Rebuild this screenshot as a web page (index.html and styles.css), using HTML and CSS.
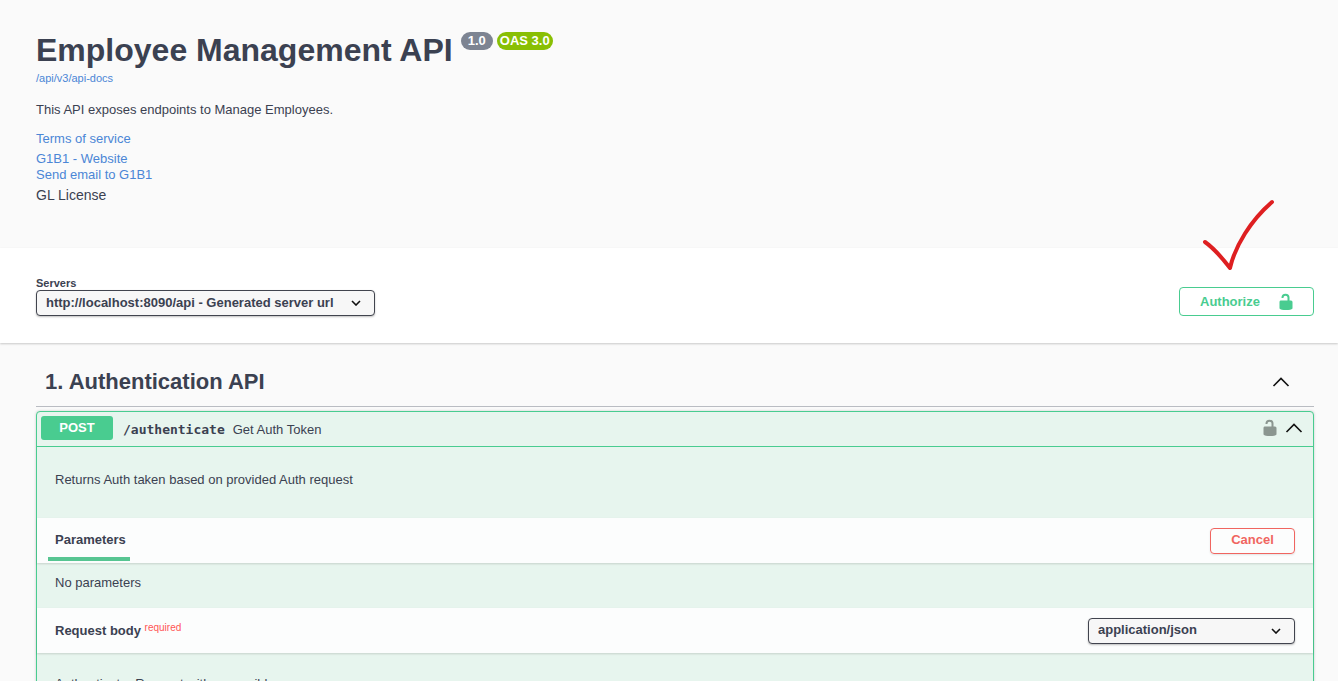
FILE: index.html
```html
<!DOCTYPE html>
<html lang="en">
<head>
<meta charset="utf-8">
<title>Employee Management API</title>
<link rel="stylesheet" href="styles.css">
</head>
<body>
<header class="info">
  <div class="title-row">
    <h1 class="title">Employee Management API</h1>
    <span class="badge badge-version">1.0</span>
    <span class="badge badge-oas">OAS 3.0</span>
  </div>
  <a class="docs-link" href="#">/api/v3/api-docs</a>
  <p class="description">This API exposes endpoints to Manage Employees.</p>
  <a class="terms" href="#">Terms of service</a>
  <div class="contact">
    <a href="#">G1B1 - Website</a>
    <a href="#">Send email to G1B1</a>
  </div>
  <span class="license">GL License</span>
</header>

<section class="schemes">
  <div class="servers">
    <label class="servers-label" for="servers">Servers</label>
    <div class="select-wrap">
      <select class="select select-server" id="servers"><option>http://localhost:8090/api - Generated server url</option></select>
      <svg class="select-arrow" viewBox="0 0 10 6"><path d="M1 1l4 4 4-4"/></svg>
    </div>
  </div>
  <div class="auth-wrap">
    <button class="authorize" type="button">
      <span>Authorize</span>
      <svg class="lock" viewBox="0 0 14 18"><path class="lock-body" d="M1.500 7.500h10.500Q13.500 7.500 13.500 9V15.500Q12 17 7 17Q2 17 .5 15.500V9Q.5 7.500 1.500 7.500z"/><path class="lock-shackle" d="M9.500 8V4.500C9.500 .7 3.500 .7 3.500 4.500V5"/></svg>
    </button>
    <svg class="tick" viewBox="0 0 72 72"><path d="M3 42C13 49 21 59 28 68C33 46 49 20 70 2"/></svg>
  </div>
</section>

<main class="operations">
  <div class="tag">
    <h2 class="tag-title">1. Authentication API</h2>
    <button class="icon-button" type="button" aria-label="Collapse section"><svg class="chevron" viewBox="0 0 18 10"><path d="M1.500 9L9 1.500 16.500 9"/></svg></button>
  </div>
  <section class="operation">
    <div class="summary">
      <span class="method">POST</span>
      <span class="path">/authenticate</span>
      <span class="summary-text">Get Auth Token</span>
      <button class="icon-button" type="button" aria-label="Authorization"><svg class="lock lock-muted" viewBox="0 0 14 18"><path class="lock-body" d="M1.500 7.500h10.500Q13.500 7.500 13.500 9V15.500Q12 17 7 17Q2 17 .5 15.500V9Q.5 7.500 1.500 7.500z"/><path class="lock-shackle" d="M9.500 8V4.500C9.500 .7 3.500 .7 3.500 4.500V5"/></svg></button>
      <button class="icon-button" type="button" aria-label="Collapse operation"><svg class="chevron" viewBox="0 0 18 10"><path d="M1.500 9L9 1.500 16.500 9"/></svg></button>
    </div>
    <p class="operation-description">Returns Auth taken based on provided Auth request</p>
    <div class="section-header">
      <h3 class="tab">Parameters</h3>
      <button class="cancel" type="button">Cancel</button>
    </div>
    <p class="no-parameters">No parameters</p>
    <div class="section-header">
      <h3 class="body-title">Request body <span class="required">required</span></h3>
      <div class="select-wrap">
        <select class="select select-media" aria-label="Media type"><option>application/json</option></select>
        <svg class="select-arrow" viewBox="0 0 10 6"><path d="M1 1l4 4 4-4"/></svg>
      </div>
    </div>
    <p class="body-description">Authenticator Request with accessible</p>
  </section>
</main>
</body>
</html>
```

FILE: styles.css
```css
* { box-sizing: border-box; }

html { height: 100%; overflow: hidden; }

body {
  margin: 0;
  background: #fafafa;
  color: #3b4151;
  font-family: "Liberation Sans", Arial, sans-serif;
  font-size: 13px;
  line-height: 16px;
}

h1, h2, h3, p { margin: 0; }

button, select { font-family: inherit; font-weight: 700; font-size: 13px; }

a { color: #4b86d6; text-decoration: none; }

.info {
  display: flex;
  flex-direction: column;
  align-items: flex-start;
  min-height: 248px;
  padding: 32px 24px 40px 36px;
}

.title-row { display: flex; align-items: flex-start; gap: 4px; }
.title { margin-right: 4px; font-size: 32px; line-height: 36px; }

.badge {
  height: 18px;
  padding: 0 7px;
  border-radius: 9px;
  color: #fff;
  font-size: 13px;
  font-weight: 700;
  line-height: 18px;
}
.badge-version { background: #7d8492; }
.badge-oas { padding: 0 3px; background: #89bf04; }

.docs-link { margin-top: 2px; font-size: 11px; }
.description { margin-top: 16px; }
.terms { margin-top: 13px; }
.contact { display: flex; flex-direction: column; margin-top: 4px; }
.license { margin-top: 4px; font-size: 14px; }

.schemes {
  display: flex;
  justify-content: space-between;
  align-items: flex-end;
  padding: 29px 24px 27px 36px;
  background: #fff;
  box-shadow: 0 1px 2px rgba(0, 0, 0, .2);
}

.servers { display: flex; flex-direction: column; }
.servers-label { font-size: 11px; font-weight: 700; line-height: 13px; }

.select-wrap { position: relative; display: flex; }
.select {
  height: 26px;
  padding: 0 36px 2px 9px;
  border: 1px solid #41444e;
  border-radius: 4px;
  background: #f7f7f7;
  box-shadow: 0 1px 2px rgba(0, 0, 0, .25);
  color: #3b4151;
  appearance: none;
}
.select-server { width: 339px; }
.select-media { width: 207px; }
.select-arrow {
  position: absolute;
  top: 10px;
  right: 14px;
  width: 10px;
  height: 6px;
  fill: none;
  stroke: #111;
  stroke-width: 1.6;
  pointer-events: none;
}

.auth-wrap { position: relative; }
.authorize {
  display: flex;
  align-items: center;
  justify-content: space-between;
  width: 135px;
  height: 29px;
  padding: 0 20px;
  border: 1px solid #49cc90;
  border-radius: 4px;
  background: transparent;
  color: #49cc90;
}
.lock { display: block; width: 14px; height: 18px; }
.lock-body { fill: #49cc90; }
.lock-shackle { fill: none; stroke: #49cc90; stroke-width: 2; }
.lock-muted .lock-body { fill: #8b9690; }
.lock-muted .lock-shackle { stroke: #8b9690; }

.tick {
  position: absolute;
  right: 40px;
  bottom: 44px;
  width: 72px;
  height: 72px;
  overflow: visible;
  fill: none;
  stroke: #de1f21;
  stroke-width: 4;
  stroke-linecap: round;
  stroke-linejoin: round;
}

.operations { padding: 16px 24px 0 36px; }

.tag {
  display: flex;
  align-items: center;
  justify-content: space-between;
  height: 48px;
  padding: 0 24px 2px 9px;
  border-bottom: 1px solid #b9bcc2;
}
.tag-title { font-size: 22px; line-height: 28px; }

.icon-button { display: flex; padding: 0; border: 0; background: none; }
.chevron { width: 18px; height: 10px; fill: none; stroke: #111; stroke-width: 1.6; }

.operation {
  margin-top: 4px;
  border: 1px solid #49cc90;
  border-radius: 4px;
  background: #e7f5ee;
  box-shadow: 0 0 3px rgba(0, 0, 0, .19);
}

.summary {
  display: flex;
  align-items: center;
  gap: 8px;
  height: 35px;
  padding: 0 10px 2px 4px;
  border-bottom: 1px solid #49cc90;
}
.method {
  width: 72px;
  height: 24px;
  border-radius: 3px;
  background: #49cc90;
  color: #fff;
  font-weight: 700;
  line-height: 23px;
  text-align: center;
}
.path, .summary-text { padding-top: 3px; }
.path { padding-left: 2px; font-family: "DejaVu Sans Mono", monospace; font-weight: 700; }
.summary-text { flex: 1; }

.operation-description { padding: 25px 18px 30px; }

.section-header {
  display: flex;
  align-items: center;
  justify-content: space-between;
  height: 45px;
  padding: 0 18px 0 11px;
  background: #fcfdfd;
  box-shadow: 0 1px 2px rgba(0, 0, 0, .15);
}
.tab {
  align-self: flex-end;
  margin-bottom: 2px;
  padding: 0 4px 9px 7px;
  border-bottom: 4px solid #57c592;
  font-size: 13px;
}
.cancel {
  width: 85px;
  height: 26px;
  padding: 0 0 2px;
  border: 1px solid #f06560;
  border-radius: 4px;
  background: transparent;
  box-shadow: 0 1px 2px rgba(0, 0, 0, .1);
  color: #f06560;
}

.no-parameters { padding: 12px 18px 17px; }
.body-title { padding-left: 7px; font-size: 13px; }
.required { color: #f55; font-size: 10px; font-weight: 400; line-height: 1; vertical-align: 4px; }
.body-description { padding: 23px 18px; }
```
